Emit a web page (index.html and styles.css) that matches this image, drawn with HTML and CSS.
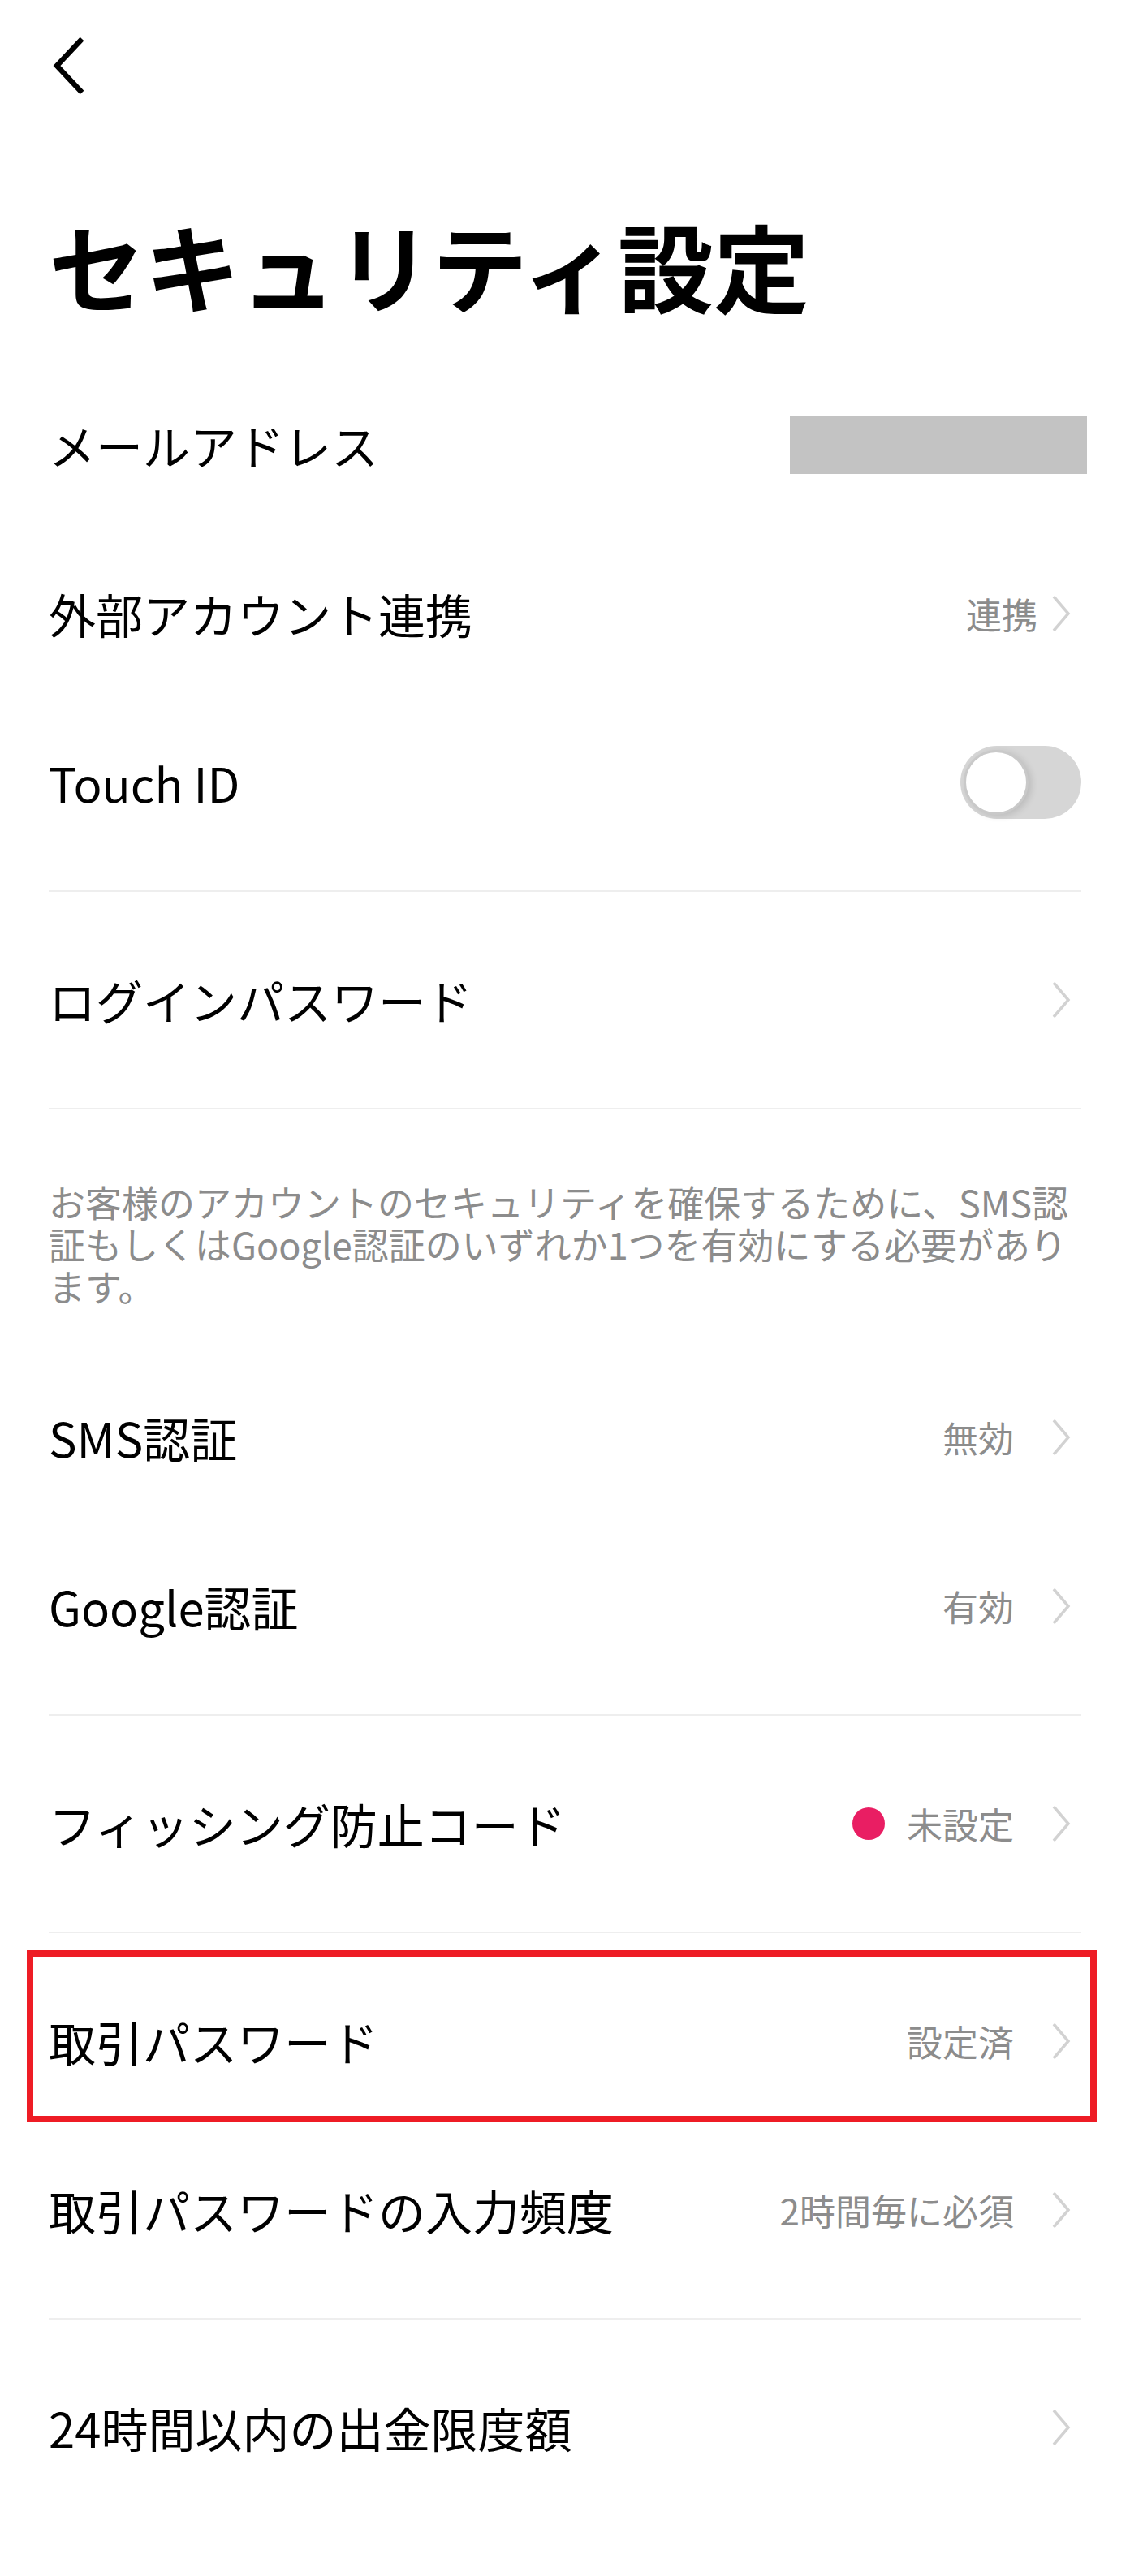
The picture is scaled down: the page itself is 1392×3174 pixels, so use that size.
FILE: index.html
```html
<!DOCTYPE html>
<html lang="ja">
<head>
    <meta charset="UTF-8">
    <meta name="viewport" content="width=device-width, initial-scale=1.0">
    <title>セキュリティ設定</title>
    <link rel="stylesheet" href="styles.css">
</head>
<body>
    <header class="top-bar">
        <svg class="back" width="44" height="72" viewBox="0 0 44 72">
            <path d="M41 3 L10 36 L41 69" fill="none" stroke="#000" stroke-width="6.5"/>
        </svg>
    </header>

    <h1 class="page-title">セキュリティ設定</h1>

    <div class="group">
        <div class="row">
            <span class="label">メールアドレス</span>
            <span class="masked"></span>
        </div>
        <div class="row">
            <span class="label">外部アカウント連携</span>
            <span class="value value-near">連携</span>
            <svg class="arrow arrow-near" width="24" height="48" viewBox="0 0 24 48"><path d="M3 3 L21 24 L3 45" fill="none" stroke="#d2d2d2" stroke-width="3.5"/></svg>
        </div>
        <div class="row">
            <span class="label">Touch ID</span>
            <span class="switch"><span class="knob"></span></span>
        </div>
    </div>

    <div class="group">
        <div class="row">
            <span class="label">ログインパスワード</span>
            <svg class="arrow" width="24" height="48" viewBox="0 0 24 48"><path d="M3 3 L21 24 L3 45" fill="none" stroke="#d2d2d2" stroke-width="3.5"/></svg>
        </div>
    </div>

    <div class="group">
        <p class="note">お客様のアカウントのセキュリティを確保するために、SMS認証もしくはGoogle認証のいずれか1つを有効にする必要があります。</p>
        <div class="row">
            <span class="label">SMS認証</span>
            <span class="value">無効</span>
            <svg class="arrow" width="24" height="48" viewBox="0 0 24 48"><path d="M3 3 L21 24 L3 45" fill="none" stroke="#d2d2d2" stroke-width="3.5"/></svg>
        </div>
        <div class="row">
            <span class="label">Google認証</span>
            <span class="value">有効</span>
            <svg class="arrow" width="24" height="48" viewBox="0 0 24 48"><path d="M3 3 L21 24 L3 45" fill="none" stroke="#d2d2d2" stroke-width="3.5"/></svg>
        </div>
    </div>

    <div class="group">
        <div class="row">
            <span class="label">フィッシング防止コード</span>
            <span class="dot"></span>
            <span class="value">未設定</span>
            <svg class="arrow" width="24" height="48" viewBox="0 0 24 48"><path d="M3 3 L21 24 L3 45" fill="none" stroke="#d2d2d2" stroke-width="3.5"/></svg>
        </div>
    </div>

    <div class="group">
        <div class="row marked">
            <span class="label">取引パスワード</span>
            <span class="value">設定済</span>
            <svg class="arrow" width="24" height="48" viewBox="0 0 24 48"><path d="M3 3 L21 24 L3 45" fill="none" stroke="#d2d2d2" stroke-width="3.5"/></svg>
            <span class="highlight"></span>
        </div>
        <div class="row">
            <span class="label">取引パスワードの入力頻度</span>
            <span class="value">2時間毎に必須</span>
            <svg class="arrow" width="24" height="48" viewBox="0 0 24 48"><path d="M3 3 L21 24 L3 45" fill="none" stroke="#d2d2d2" stroke-width="3.5"/></svg>
        </div>
    </div>

    <div class="group last">
        <div class="row">
            <span class="label">24時間以内の出金限度額</span>
            <svg class="arrow" width="24" height="48" viewBox="0 0 24 48"><path d="M3 3 L21 24 L3 45" fill="none" stroke="#d2d2d2" stroke-width="3.5"/></svg>
        </div>
    </div>
</body>
</html>
```

FILE: styles.css
```css
body {
    margin: 0;
    padding: 0 60px;
    background: #fff;
    color: #000;
    font-family: "Noto Sans CJK JP", "Noto Sans", sans-serif;
}
.top-bar {
    height: 162px;
    display: flex;
    align-items: center;
}
.back {
    display: block;
}
.page-title {
    margin: 94px 0 19px;
    font-size: 118px;
    line-height: 140px;
    font-weight: 700;
}
.group {
    padding: 29px 0;
    border-bottom: 2px solid #eeeeee;
}
.group.last {
    border-bottom: none;
}
.row {
    height: 208px;
    display: flex;
    align-items: center;
    position: relative;
}
.label {
    flex: 1;
    font-size: 58px;
    line-height: 70px;
}
.value {
    font-size: 44px;
    line-height: 56px;
    color: #8c8c8c;
}
.arrow {
    display: block;
    margin: 0 13px 0 46px;
}
.arrow-near {
    margin-left: 17px;
}
.masked {
    width: 366px;
    height: 71px;
    margin-right: -7px;
    background: #c3c3c3;
}
.switch {
    width: 149px;
    height: 90px;
    border-radius: 45px;
    background: #d6d6d6;
    display: flex;
    align-items: center;
    padding-left: 4px;
    box-sizing: border-box;
}
.knob {
    width: 80px;
    height: 80px;
    border-radius: 50%;
    background: #fff;
    border: 3px solid #c9c9c9;
    box-sizing: border-box;
    box-shadow: 4px 2px 8px rgba(0, 0, 0, 0.12);
}
.note {
    margin: 59px 0 56px;
    font-size: 45px;
    line-height: 52px;
    color: #8c8c8c;
}
.dot {
    width: 40px;
    height: 40px;
    border-radius: 50%;
    background: #e91e63;
    margin-right: 27px;
}
.highlight {
    position: absolute;
    left: -27px;
    right: -19px;
    top: -8px;
    bottom: 4px;
    border: 8px solid #ee1c25;
}
```
